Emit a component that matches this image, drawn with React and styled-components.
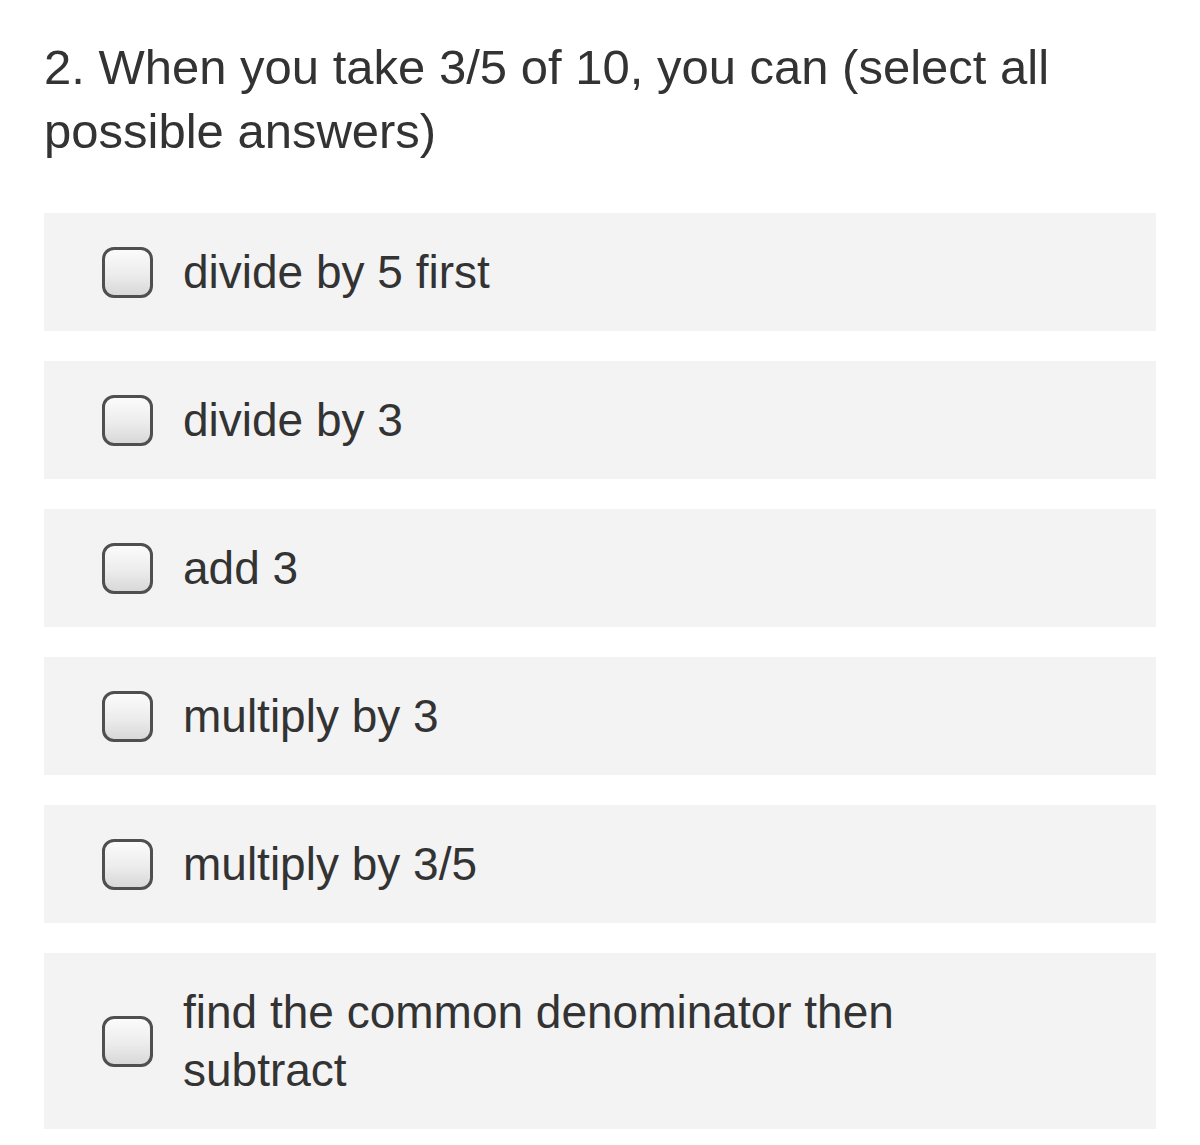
import React from "react";
import styled, { createGlobalStyle } from "styled-components";

const GlobalStyle = createGlobalStyle`
  body {
    margin: 0;
    background: #ffffff;
    font-family: "Liberation Sans", Arial, sans-serif;
    color: #333333;
  }
`;

const Page = styled.div`
  box-sizing: border-box;
  width: 1200px;
  padding: 35px 44px 0;
`;

const Question = styled.div`
  font-size: 49px;
  line-height: 64px;
  color: #333333;
  margin-bottom: 50px;
  max-width: 1040px;
`;

const Options = styled.div`
  display: flex;
  flex-direction: column;
  gap: 30px;
`;

const Option = styled.label`
  display: flex;
  align-items: center;
  box-sizing: border-box;
  width: 100%;
  padding: 30px 0 30px 58px;
  background: #f3f3f3;
  cursor: pointer;
`;

const Box = styled.span`
  flex: 0 0 auto;
  box-sizing: border-box;
  width: 51px;
  height: 51px;
  border: 3px solid #4f4f4f;
  border-radius: 12px;
  background: linear-gradient(180deg, #fbfbfb 0%, #ececec 55%, #d8d8d8 100%);
`;

const Label = styled.span`
  margin-left: 30px;
  font-size: 46px;
  line-height: 58px;
  color: #333333;
  max-width: 760px;
`;

const OPTIONS = [
  "divide by 5 first",
  "divide by 3",
  "add 3",
  "multiply by 3",
  "multiply by 3/5",
  "find the common denominator then subtract",
];

const App = () => {
  return (
    <>
      <GlobalStyle />
      <Page>
        <Question>2. When you take 3/5 of 10, you can (select all possible answers)</Question>
        <Options>
          {OPTIONS.map((text) => (
            <Option key={text}>
              <Box />
              <Label>{text}</Label>
            </Option>
          ))}
        </Options>
      </Page>
    </>
  );
};

export default App;
